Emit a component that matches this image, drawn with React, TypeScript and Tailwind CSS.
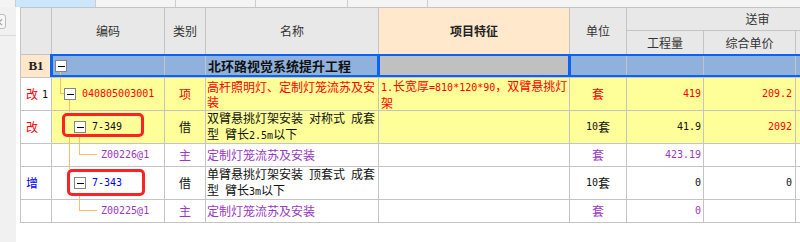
import type { ReactNode } from 'react'

const M = ({ children }: { children: ReactNode }) => (
  <span className="font-['DejaVu_Sans_Mono'] text-[10px]">{children}</span>
)

const Minus = () => (
  <span className="relative flex h-[12px] w-[12px] shrink-0 items-center justify-center border border-[#858585] bg-white">
    <span className="h-px w-[7px] bg-black" />
  </span>
)

const red = 'text-[#ff0000]'
const purple = 'text-[#9b37c4]'
const blue = 'text-[#0000ff]'
const ink = 'text-[#111]'

const hd = 'row-span-2 flex items-center justify-center bg-[#e8e8e8] text-[#333]'
const yl = 'bg-[#ffff99]'
const wt = 'bg-white'
const sel = 'bg-[#8fb1dc]'
const mid = 'flex items-center justify-center'
const num = 'flex items-center justify-end pr-[3px]'

export default function App() {
  return (
    <div className="flex h-[242px] w-[800px] flex-col overflow-hidden bg-white font-['Noto_Sans_CJK_SC',sans-serif] text-[12px] leading-[14px]">
      {/* column strip above the sheet */}
      <div className="flex h-[7px] shrink-0 bg-[#f4f4f4]">
        <div className="w-[16px] border-r border-[#cdcdcd]" />
        <div className="w-[80px] border-r border-[#cdcdcd] bg-[#cce7fd]" />
        <div className="w-[80px] border-r border-[#cdcdcd]" />
        <div className="w-[80px] border-r border-[#cdcdcd]" />
        <div className="w-[92px] border-r border-[#cdcdcd]" />
        <div className="w-[80px] border-r border-[#cdcdcd]" />
      </div>

      <div className="flex flex-1">
        <div className="flex w-[20px] shrink-0">
          <div className="flex w-[16px] flex-col bg-[#f1f1f1]">
            <div className="mt-[7px] ml-[-9px] flex h-[15px] w-[15px] items-center justify-end rounded-[3px] border border-[#bdbdbd] bg-[#f7f7f7] pr-[1px] text-[10px] leading-none text-[#777]">
              ×
            </div>
            <div className="mt-[6px] h-px w-full bg-[#dadada]" />
          </div>
          <div className="w-[4px] bg-white" />
        </div>

        <div className="relative shrink-0 self-start">
          {/* tree connector lines */}
          <svg
            className="pointer-events-none absolute left-0 top-0"
            width="780"
            height="235"
            viewBox="20 7 780 235"
          >
            <g stroke="#ffbb6e" strokeWidth="1" fill="none" shapeRendering="crispEdges">
              <path d="M60.5 72 V93.5 H64" />
              <path d="M69.5 100 V112" />
              <path d="M69.5 137 V169" />
              <path d="M79.5 137 V154.5 H97" />
              <path d="M79.5 195 V210.5 H97" />
            </g>
          </svg>

          <div className="grid w-[869px] grid-cols-[30px_112px_40px_172px_190px_56px_76px_91px_92px] grid-rows-[22px_23px_22px_32px_32px_22px_32px_22px] gap-px bg-[#c4c4c4] p-px">
            {/* header */}
            <div className={hd} />
            <div className={hd}>编码</div>
            <div className={hd}>类别</div>
            <div className={hd}>名称</div>
            <div className="row-span-2 flex items-center justify-center bg-[#ffe8cc] font-bold text-[#222]">
              项目特征
            </div>
            <div className={hd}>单位</div>
            <div className="col-span-3 flex items-center justify-center bg-[#e8e8e8] text-[#333]">送审</div>
            <div className="flex items-center justify-center bg-[#e8e8e8] text-[#333]">工程量</div>
            <div className="flex items-center justify-center bg-[#e8e8e8] text-[#333]">综合单价</div>
            <div className="bg-[#e8e8e8]" />

            {/* B1 */}
            <div className="flex items-center justify-center bg-[#ffe7cc] font-['Liberation_Serif'] text-[13px] font-bold text-[#222]">
              B1
            </div>
            <div className={`${sel} flex items-center pl-[3px]`}>
              <Minus />
            </div>
            <div className={sel} />
            <div className={`${sel} flex items-center pl-[2px] text-[13px] font-bold text-[#111]`}>
              北环路视觉系统提升工程
            </div>
            <div className="bg-[#c0c0c0]" />
            <div className={sel} />
            <div className={sel} />
            <div className={sel} />
            <div className={sel} />

            {/* row 1 */}
            <div className={`${wt} flex items-center pl-[5px]`}>
              <span className={red}>改</span>
              <span className={`ml-[4px] ${ink}`}>
                <M>1</M>
              </span>
            </div>
            <div className={`${yl} flex items-center gap-[6px] pl-[12px] ${red}`}>
              <Minus />
              <M>040805003001</M>
            </div>
            <div className={`${yl} ${mid} ${red}`}>项</div>
            <div className={`${yl} flex items-center whitespace-nowrap pl-px leading-[15px] ${red}`}>
              <div>
                高杆照明灯、定制灯笼流苏及安
                <br />装
              </div>
            </div>
            <div className={`${yl} flex items-center whitespace-nowrap pl-[2px] leading-[15px] ${red}`}>
              <div>
                <M>1.</M>长宽厚<M>=810*120*90</M>，双臂悬挑灯
                <br />架
              </div>
            </div>
            <div className={`${yl} ${mid} ${red}`}>套</div>
            <div className={`${yl} ${num} !pr-[2px] ${red}`}>
              <M>419</M>
            </div>
            <div className={`${yl} ${num} ${red}`}>
              <M>209.2</M>
            </div>
            <div className={yl} />

            {/* row 2 */}
            <div className={`${wt} flex items-center pl-[5px] ${red}`}>改</div>
            <div className={`${yl} flex items-center gap-[6px] pl-[22px] ${ink}`}>
              <Minus />
              <M>7-349</M>
            </div>
            <div className={`${yl} ${mid} ${ink}`}>借</div>
            <div className={`${yl} flex items-center whitespace-nowrap pl-px ${ink}`}>
              <div>
                双臂悬挑灯架安装<M> </M>对称式<M> </M>成套
                <br />型<M> </M>臂长<M>2.5m</M>以下
              </div>
            </div>
            <div className={yl} />
            <div className={`${yl} ${mid} ${ink}`}>
              <M>10</M>套
            </div>
            <div className={`${yl} ${num} !pr-[2px] ${ink}`}>
              <M>41.9</M>
            </div>
            <div className={`${yl} ${num} ${red}`}>
              <M>2092</M>
            </div>
            <div className={yl} />

            {/* row 3 */}
            <div className={wt} />
            <div className={`${wt} flex items-center pl-[49px] ${purple}`}>
              <M>Z00226@1</M>
            </div>
            <div className={`${wt} ${mid} ${purple}`}>主</div>
            <div className={`${wt} flex items-center pl-px ${purple}`}>定制灯笼流苏及安装</div>
            <div className={wt} />
            <div className={`${wt} ${mid} ${purple}`}>套</div>
            <div className={`${wt} ${num} !pr-[2px] ${purple}`}>
              <M>423.19</M>
            </div>
            <div className={wt} />
            <div className={wt} />

            {/* row 4 */}
            <div className={`${wt} flex items-center pl-[5px] ${blue}`}>增</div>
            <div className={`${wt} flex items-center gap-[6px] pl-[22px] ${blue}`}>
              <Minus />
              <M>7-343</M>
            </div>
            <div className={`${wt} ${mid} ${ink}`}>借</div>
            <div className={`${wt} flex items-center whitespace-nowrap pl-px ${ink}`}>
              <div>
                单臂悬挑灯架安装<M> </M>顶套式<M> </M>成套
                <br />型<M> </M>臂长<M>3m</M>以下
              </div>
            </div>
            <div className={wt} />
            <div className={`${wt} ${mid} ${ink}`}>
              <M>10</M>套
            </div>
            <div className={`${wt} ${num} !pr-[2px] ${ink}`}>
              <M>0</M>
            </div>
            <div className={`${wt} ${num} ${ink}`}>
              <M>0</M>
            </div>
            <div className={wt} />

            {/* row 5 */}
            <div className={wt} />
            <div className={`${wt} flex items-center pl-[49px] ${purple}`}>
              <M>Z00225@1</M>
            </div>
            <div className={`${wt} ${mid} ${purple}`}>主</div>
            <div className={`${wt} flex items-center pl-px ${purple}`}>定制灯笼流苏及安装</div>
            <div className={wt} />
            <div className={`${wt} ${mid} ${purple}`}>套</div>
            <div className={`${wt} ${num} !pr-[2px] ${purple}`}>
              <M>0</M>
            </div>
            <div className={wt} />
            <div className={wt} />
          </div>

          {/* selected row and focused cell */}
          <div className="pointer-events-none absolute left-[30px] top-[47px] h-[23px] w-[900px] border-y-2 border-l-[3px] border-[#0b63f6]" />
          <div className="pointer-events-none absolute left-[357px] top-[47px] h-[23px] w-[194px] border-x-[3px] border-y-2 border-[#0b63f6]" />

          {/* red annotation marks */}
          <div className="pointer-events-none absolute left-[42px] top-[106px] h-[24px] w-[82px] rounded-[5px] border-[3px] border-[#ff2222]" />
          <div className="pointer-events-none absolute left-[47px] top-[162px] h-[27px] w-[78px] rounded-[5px] border-[3px] border-[#ff2222]" />
        </div>
      </div>
    </div>
  )
}
